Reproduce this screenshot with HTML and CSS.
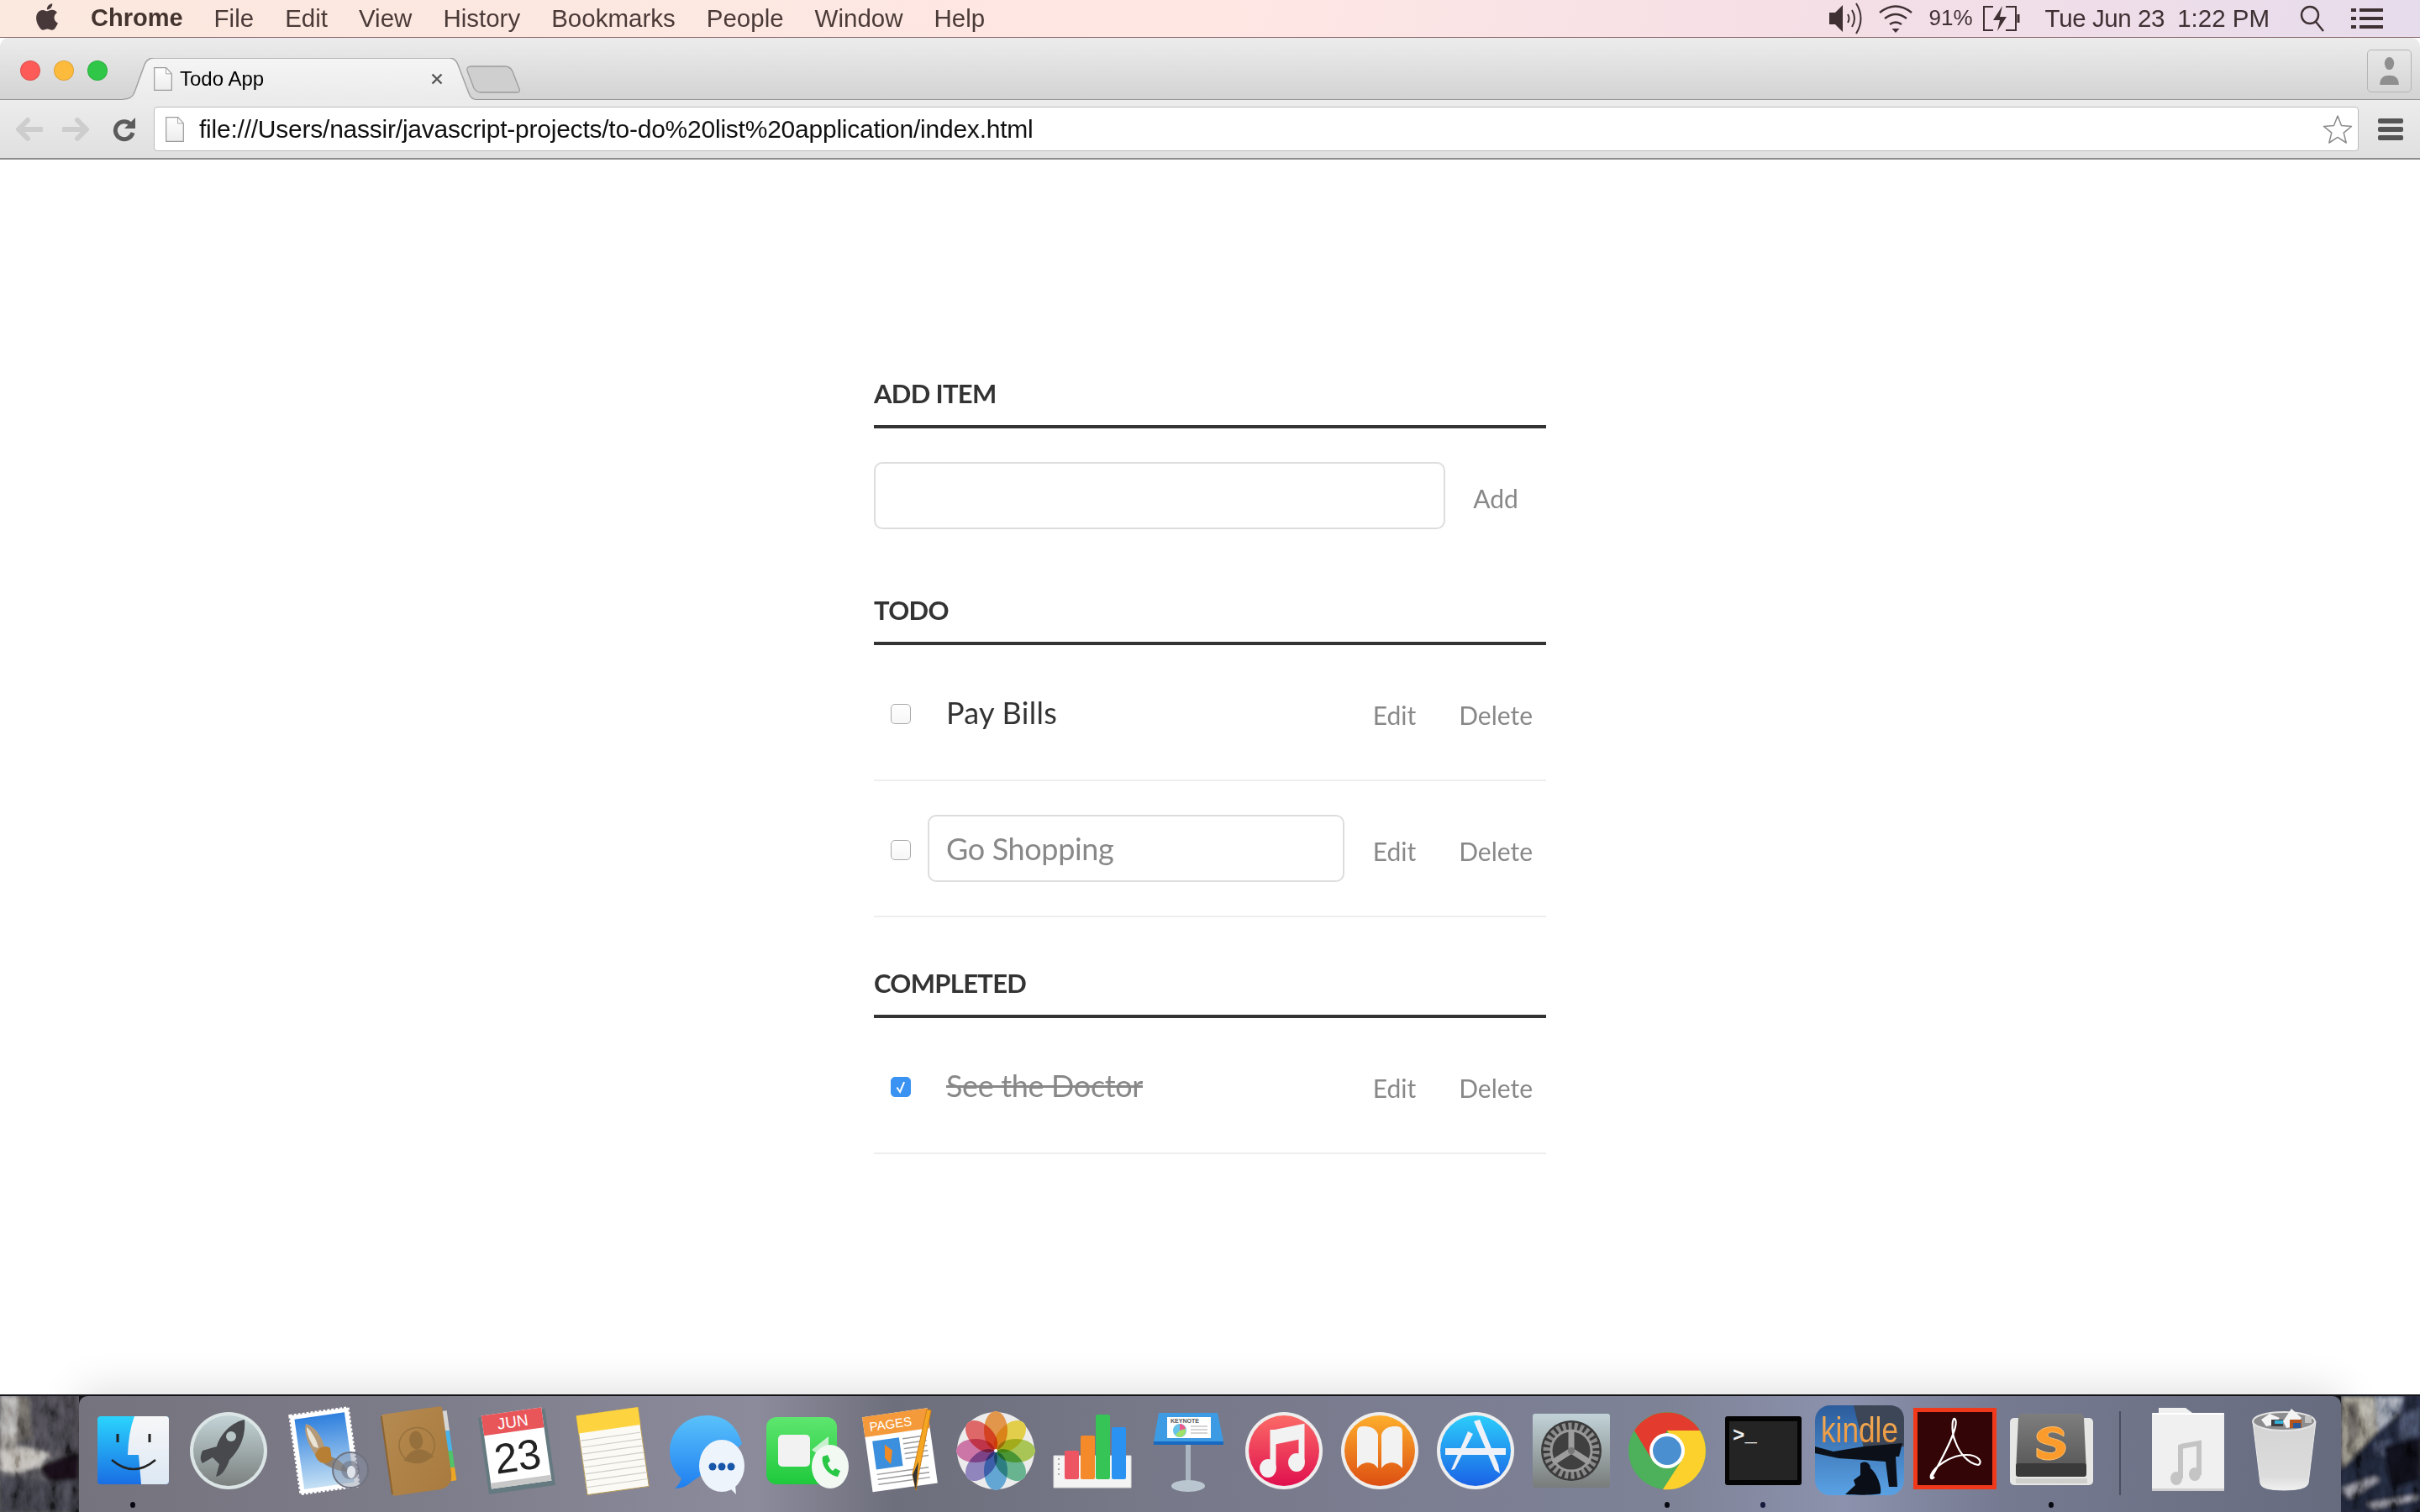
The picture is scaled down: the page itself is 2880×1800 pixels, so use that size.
FILE: index.html
```html
<!DOCTYPE html>
<html lang="en">
<head>
<meta charset="utf-8">
<title>Todo App</title>
<link rel="stylesheet" href="styles.css">
</head>
<body>

<svg class="defs">
	<defs>
		<linearGradient id="g_finder" x1="0" y1="0" x2="0" y2="1"><stop offset="0" stop-color="#2bd4fd"/><stop offset="1" stop-color="#1a6ee4"/></linearGradient>
		<linearGradient id="g_finder2" x1="0" y1="0" x2="0" y2="1"><stop offset="0" stop-color="#f7f7f8"/><stop offset="1" stop-color="#dce8f4"/></linearGradient>
		<linearGradient id="g_rocket" x1="0" y1="0" x2="0" y2="1"><stop offset="0" stop-color="#c3d4d7"/><stop offset="1" stop-color="#7b807e"/></linearGradient>
		<linearGradient id="g_sky" x1="0" y1="0" x2="0" y2="1"><stop offset="0" stop-color="#2f80de"/><stop offset="1" stop-color="#c4e0f4"/></linearGradient>
		<linearGradient id="g_book" x1="0" y1="0" x2="1" y2="1"><stop offset="0" stop-color="#b58a50"/><stop offset="1" stop-color="#a87a3e"/></linearGradient>
		<linearGradient id="g_bubble" x1="0" y1="0" x2="0" y2="1"><stop offset="0" stop-color="#5ac2fb"/><stop offset="1" stop-color="#1f7ff0"/></linearGradient>
		<linearGradient id="g_ftime" x1="0" y1="0" x2="0" y2="1"><stop offset="0" stop-color="#5ee66f"/><stop offset="1" stop-color="#1fc93c"/></linearGradient>
		<linearGradient id="g_music" x1="0" y1="0" x2="0" y2="1"><stop offset="0" stop-color="#fb6a66"/><stop offset="1" stop-color="#e0104f"/></linearGradient>
		<linearGradient id="g_ibooks" x1="0" y1="0" x2="0" y2="1"><stop offset="0" stop-color="#fdae2c"/><stop offset="1" stop-color="#dd4f12"/></linearGradient>
		<linearGradient id="g_store" x1="0" y1="0" x2="0" y2="1"><stop offset="0" stop-color="#2ccdfb"/><stop offset="1" stop-color="#1a62e6"/></linearGradient>
		<linearGradient id="g_prefs" x1="0" y1="0" x2="0" y2="1"><stop offset="0" stop-color="#c2d3d8"/><stop offset="1" stop-color="#787c7a"/></linearGradient>
		<linearGradient id="g_kindle" x1="0" y1="0" x2="0" y2="1"><stop offset="0" stop-color="#2c5c9c"/><stop offset="1" stop-color="#5aa2e4"/></linearGradient>
		<linearGradient id="g_text" x1="0" y1="0" x2="0" y2="1"><stop offset="0" stop-color="#f6b25a"/><stop offset="1" stop-color="#e8903a"/></linearGradient>
		<linearGradient id="g_sublime" x1="0" y1="0" x2="0" y2="1"><stop offset="0" stop-color="#7e7e7e"/><stop offset="1" stop-color="#565656"/></linearGradient>
		<linearGradient id="g_trash" x1="0" y1="0" x2="0" y2="1"><stop offset="0" stop-color="#d4d4d4"/><stop offset=".8" stop-color="#dcdcdc"/><stop offset="1" stop-color="#f0f0f0"/></linearGradient>
		<linearGradient id="g_tab" x1="0" y1="0" x2="0" y2="1"><stop offset="0" stop-color="#f5f5f5"/><stop offset="1" stop-color="#ebebeb"/></linearGradient>
		<linearGradient id="g_sheet" x1="0" y1="0" x2="0" y2="1"><stop offset="0" stop-color="#ffffff"/><stop offset="1" stop-color="#ececec"/></linearGradient>
		<filter id="soft"><feGaussianBlur stdDeviation="2.400"/></filter>
		<filter id="rock" x="0" y="0" width="100%" height="100%">
			<feTurbulence type="fractalNoise" baseFrequency=".07 .035" numOctaves="4" seed="7"/>
			<feColorMatrix type="matrix" values=".5 .5 0 0 0 .5 .5 0 0 0 .5 .5 0 0 0 0 0 0 0 1"/>
			<feComponentTransfer><feFuncR type="linear" slope="2.200" intercept="-.7"/><feFuncG type="linear" slope="2.200" intercept="-.7"/><feFuncB type="linear" slope="2.200" intercept="-.7"/></feComponentTransfer>
		</filter>
	</defs>
</svg>

<div class="menubar">
	<svg class="apple" viewBox="0 0 24 24"><path d="M18.71 19.5c-.83 1.24-1.71 2.45-3.05 2.47-1.34.03-1.77-.79-3.29-.79-1.53 0-2 .77-3.27.82-1.31.05-2.3-1.32-3.14-2.53C4.25 17 2.94 12.45 4.7 9.39c.87-1.52 2.43-2.48 4.12-2.51 1.28-.02 2.5.87 3.29.87.78 0 2.26-1.07 3.81-.91.65.03 2.47.26 3.64 1.98-.09.06-2.17 1.28-2.15 3.81.03 3.02 2.65 4.03 2.68 4.04-.03.07-.42 1.44-1.38 2.83M13 3.5c.73-.83 1.94-1.46 2.94-1.5.13 1.17-.34 2.35-1.04 3.19-.69.85-1.83 1.51-2.95 1.42-.15-1.15.41-2.35 1.05-3.11z"/></svg>
	<b class="menu_app">Chrome</b>
	<span>File</span>
	<span>Edit</span>
	<span>View</span>
	<span>History</span>
	<span>Bookmarks</span>
	<span>People</span>
	<span>Window</span>
	<span>Help</span>
	<div class="status">
		<svg class="st_sound" viewBox="0 0 42 44" fill="none" stroke="#3f3033" stroke-width="2"><path d="M1 15h7l9-9v32l-9-9H1z" fill="#3f3033" stroke="none"/><path d="M23 17q3 5 0 10"/><path d="M28 12q6 10 0 20"/><path d="M33 4q11 18 0 36"/></svg>
		<svg class="st_wifi" viewBox="0 0 42 36" fill="none" stroke="#3f3033" stroke-width="2.400"><path d="M2 11q19-15 38 0"/><path d="M8 18q13-10 26 0"/><path d="M14 25q7-5 14 0"/><path d="M16.500 30h9l-4.500 5z" fill="#3f3033" stroke="none"/></svg>
		<span class="st_pct">91%</span>
		<svg class="st_batt" viewBox="0 0 46 32" fill="none" stroke="#3f3033" stroke-width="2"><path d="M13 2H2v28h11M28 2h12v28H28"/><path d="M24 1 13 18h8l-3 13 11-17h-8z" fill="#3f3033" stroke="none"/><path d="M43 11v10" stroke-width="3"/></svg>
		<span class="st_date">Tue Jun 23</span>
		<span class="st_time">1:22 PM</span>
		<svg class="st_search" viewBox="0 0 30 32" fill="none" stroke="#3f3033" stroke-width="2.400"><circle cx="12" cy="12" r="10"/><path d="M19 20l9 11"/></svg>
		<svg class="st_list" viewBox="0 0 38 24" fill="#3f3033"><path d="M0 0h6v4H0zM10 0h28v4H10zM0 10h6v4H0zM10 10h28v4H10zM0 20h6v4H0zM10 20h28v4H10z"/></svg>
	</div>
</div>

<div class="browser">
	<div class="tabstrip">
		<div class="lights">
			<span class="light light_red"></span>
			<span class="light light_yellow"></span>
			<span class="light light_green"></span>
		</div>
		<div class="tab">
			<svg class="tab_bg" viewBox="0 0 418 50"><path d="M0 49C8 49 11 46 13 41L25 8C27 3 30 0 36 0H388C393 0 396 3 398 8L411 42C413 47 415 49 418 49V50H0z" fill="url(#g_tab)"/><path d="M0 49C8 49 11 46 13 41L25 8C27 3 30 0 36 0H388C393 0 396 3 398 8L411 42C413 47 415 49 418 49" fill="none" stroke="#a2a2a2" stroke-width="1.500"/></svg>
			<svg class="doc_icon" viewBox="0 0 22 28"><path d="M.7.7h14l6.600 7v19.600H.7z" fill="url(#g_sheet)" stroke="#9a9a9a" stroke-width="1.200"/><path d="M14.500.7v7.200h6.800" fill="none" stroke="#aaa"/></svg>
			<span class="tab_title">Todo App</span>
			<svg class="tab_close" viewBox="0 0 14 14"><path d="M1.500 1.500l11 11M12.500 1.500l-11 11" stroke="#555" stroke-width="2.400"/></svg>
		</div>
		<svg class="newtab" viewBox="0 0 66 34"><path d="M7 1H47C52 1 54 3 56 7L64 28C65 31 64 32 61 32H18C14 32 12 30 10 27L2 6C1 3 3 1 7 1z" fill="#cfcfcf" stroke="#9c9c9c" stroke-width="1.300"/></svg>
		<div class="profile">
			<svg viewBox="0 0 26 36" class="profile_icon"><ellipse cx="13" cy="8" rx="6" ry="8" fill="#8f8f8f"/><path d="M1 35c0-9 5-12 12-12s12 3 12 12z" fill="#8f8f8f"/></svg>
		</div>
	</div>

	<div class="toolbar">
		<svg class="nav_arrow" viewBox="0 0 32 28"><path d="M14 3 3 14l11 11M4 14h26" fill="none" stroke="#cdcdcd" stroke-width="6" stroke-linecap="round" stroke-linejoin="round"/></svg>
		<svg class="nav_arrow" viewBox="0 0 32 28"><path d="M18 3l11 11-11 11M28 14H2" fill="none" stroke="#cdcdcd" stroke-width="6" stroke-linecap="round" stroke-linejoin="round"/></svg>
		<svg class="nav_reload" viewBox="0 0 30 30"><path d="M22 8.500A10.500 10.500 0 1 0 25 19" fill="none" stroke="#5c5c5c" stroke-width="5"/><path d="M28 1v13H15z" fill="#5c5c5c"/></svg>
		<div class="omnibox">
			<svg class="doc_icon doc_url" viewBox="0 0 22 30"><path d="M.7.7h14l6.600 7v21.600H.7z" fill="url(#g_sheet)" stroke="#9a9a9a" stroke-width="1.200"/><path d="M14.500.7v7.200h6.800" fill="none" stroke="#aaa"/></svg>
			<span class="url">file:///Users/nassir/javascript-projects/to-do%20list%20application/index.html</span>
			<svg class="star" viewBox="0 0 36 36"><path d="M18 2l4.500 11.500 12 .9-9.300 7.700 3 11.900L18 27.400 7.800 34l3-11.900L1.500 14.400l12-.9z" fill="#fff" stroke="#8a8a8a" stroke-width="1.500" stroke-linejoin="round"/></svg>
		</div>
		<div class="hamburger"><span></span><span></span><span></span></div>
	</div>

	<div class="page">
		<div class="app">
			<section class="section section_add">
				<h3 class="section_title">Add Item</h3>
				<div class="add_row">
					<input type="text" class="field field_new">
					<button class="btn btn_add">Add</button>
				</div>
			</section>

			<section class="section">
				<h3 class="section_title">Todo</h3>
				<ul class="items">
					<li class="item">
						<span class="check"></span>
						<label class="item_label">Pay Bills</label>
						<div class="item_actions"><button class="btn">Edit</button><button class="btn">Delete</button></div>
					</li>
					<li class="item">
						<span class="check"></span>
						<input type="text" class="field field_edit" value="Go Shopping">
						<div class="item_actions"><button class="btn">Edit</button><button class="btn">Delete</button></div>
					</li>
				</ul>
			</section>

			<section class="section">
				<h3 class="section_title">Completed</h3>
				<ul class="items">
					<li class="item">
						<span class="check check_on"><svg viewBox="0 0 24 24"><path d="M7 12.500l4 6 5.500-13" fill="none" stroke="#fff" stroke-width="2.200"/></svg></span>
						<label class="item_label item_done">See the Doctor</label>
						<div class="item_actions"><button class="btn">Edit</button><button class="btn">Delete</button></div>
					</li>
				</ul>
			</section>
		</div>
	</div>
</div>

<div class="desk">
	<svg class="wall" viewBox="0 0 94 138" preserveAspectRatio="none">
		<rect width="94" height="138" fill="#464549"/>
		<g filter="url(#soft)">
			<path d="M0 0H20V44H0z" fill="#a5a2a0"/>
			<path d="M20 0H34L38 50 20 54z" fill="#56534f"/>
			<path d="M36 0H94V66L50 74 38 40z" fill="#434147"/>
			<path d="M0 44H18L22 66H0z" fill="#85817d"/>
			<path d="M0 66 30 60 58 70 46 84 20 92 0 88z" fill="#bcb8b2"/>
			<path d="M46 84 94 66V100L60 102z" fill="#141113"/>
			<path d="M0 96 30 98 60 102 94 100V138H0z" fill="#393941"/>
		</g>
		<rect class="wall_grain" width="94" height="138" filter="url(#rock)"/>
	</svg>

	<div class="dock">
		<div class="slot"><svg viewBox="0 0 110 110"><rect x="13" y="14" width="85" height="81" rx="4" fill="url(#g_finder)"/><path d="M57 14H94Q98 14 98 18V91Q98 95 94 95H65L62 60H49Q50 32 57 14z" fill="url(#g_finder2)"/><path d="M35.500 35h3v10h-3zM73.500 35h3v10h-3z" fill="#222"/><path d="M30 66Q56 88 82 66" fill="none" stroke="#222" stroke-width="2.500"/></svg><i class="dot"></i></div>

		<div class="slot"><svg viewBox="0 0 110 110"><circle cx="55" cy="55" r="46" fill="#dce5e6"/><circle cx="55" cy="55" r="42" fill="url(#g_rocket)"/><path d="M74 18C60 21 46 33 41 50L24 55C21 62 21 66 24 70L36 63 44 71 40 86C46 85 52 78 56 66 68 54 76 38 74 18z" fill="#47494c"/><circle cx="58" cy="38" r="6" fill="#b8c6c8"/></svg></div>

		<div class="slot"><svg viewBox="0 0 110 110"><g transform="translate(6 0) rotate(-8 50 55)"><rect x="14" y="8" width="70" height="94" fill="#fff" stroke="#fff" stroke-width="3" stroke-dasharray="3 2"/><rect x="19" y="13" width="60" height="84" fill="url(#g_sky)"/></g><path d="M33 23C44 26 54 40 56 56L44 60C36 48 30 34 33 23z" fill="#b49a78"/><path d="M34 27C40 32 46 42 48 52L42 50C37 42 34 34 34 27z" fill="#eae4d6"/><path d="M56 62C64 60 76 66 84 80 74 80 62 76 54 70z" fill="#8c8172"/><path d="M44 60C48 50 56 48 62 52L64 66C58 72 48 72 44 60z" fill="#b77f34"/><circle cx="86" cy="78" r="21" fill="#8a93a6" fill-opacity=".45" stroke="#6f7380" stroke-width="2"/><circle cx="86" cy="78" r="11" fill="#6f7380" fill-opacity=".6"/><path d="M82 80c0-5 3-7 5-7s5 2 5 7-3 8-5 8-5-3-5-8z" fill="#dfe4ea"/></svg></div>

		<div class="slot"><svg viewBox="0 0 110 110"><g transform="rotate(-8 55 55)"><rect x="86" y="12" width="7" height="24" fill="#d6d6d6"/><rect x="86" y="36" width="7" height="24" fill="#4ab4e8"/><rect x="86" y="60" width="7" height="20" fill="#4fc46a"/><rect x="86" y="80" width="7" height="16" fill="#eda624"/><path d="M18 6H85Q88 6 88 9V86Q88 104 70 104H18Q15 104 15 101V9Q15 6 18 6z" fill="url(#g_book)"/><path d="M15 8v94" stroke="#8c6430" stroke-width="2"/><circle cx="52" cy="48" r="21" fill="none" stroke="#96703c" stroke-width="1.500"/><ellipse cx="52" cy="42" rx="8" ry="11" fill="#96703c"/><path d="M34 64q18-22 36 0q-18 10-36 0z" fill="#96703c"/></g></svg></div>

		<div class="slot"><svg viewBox="0 0 110 110"><g transform="rotate(-8 55 55)"><rect x="15" y="10" width="80" height="92" fill="#657a80"/><rect x="19" y="8" width="72" height="88" fill="#fff"/><rect x="19" y="8" width="72" height="24" fill="#e9565a"/><text x="55" y="27" class="cal_month">JUN</text><text x="55" y="79" class="cal_day">23</text><rect x="19" y="89" width="72" height="7" fill="#c8c8c8"/></g></svg></div>

		<div class="slot"><svg viewBox="0 0 110 110"><g transform="rotate(-8 55 55)"><rect x="18" y="8" width="74" height="95" fill="#fbfaf5" stroke="#b79a54"/><rect x="18" y="8" width="74" height="21" fill="#fdd33f"/><path d="M18 38h74M18 46h74M18 54h74M18 62h74M18 70h74M18 78h74M18 86h74M18 94h74" stroke="#cfcfca" stroke-width="1.200"/></g></svg></div>

		<div class="slot"><svg viewBox="0 0 110 110"><path d="M54 13C30 13 9 30 9 56c0 14 6 25 14 32-2 5-4 9-8 12 8 0 15-3 20-8l30-20 30-25C90 27 76 13 54 13z" fill="url(#g_bubble)"/><ellipse cx="71" cy="73" rx="27" ry="31" fill="#eef4fb"/><path d="M80 99l8 8-1-12z" fill="#eef4fb"/><circle cx="60" cy="74" r="4.500" fill="#1756a8"/><circle cx="71" cy="74" r="4.500" fill="#1756a8"/><circle cx="82" cy="74" r="4.500" fill="#1756a8"/></svg></div>

		<div class="slot"><svg viewBox="0 0 110 110"><rect x="10" y="15" width="84" height="80" rx="12" fill="url(#g_ftime)"/><rect x="24" y="36" width="38" height="38" rx="5" fill="#f2f2f2"/><path d="M64 54l20-16v30z" fill="#eaf6ec" fill-opacity=".8"/><ellipse cx="86" cy="74" rx="22" ry="26" fill="#f2f8f2"/><path d="M77 62c-2 10 6 22 18 24l3-7-6-3-3 3c-3-2-5-6-6-9l3-3-3-7z" fill="#28c745"/></svg></div>

		<div class="slot"><svg viewBox="0 0 110 110"><g transform="rotate(-8 50 55)"><rect x="16" y="10" width="78" height="90" fill="#fff"/><rect x="16" y="10" width="78" height="24" fill="#f49a3a"/><text x="23" y="28" class="pages_name">PAGES</text><rect x="24" y="40" width="32" height="34" fill="#3b8fdc"/><path d="M38 46l8 8-4 16-6-8z" fill="#f08a24"/><path d="M60 42h28M60 48h28M60 54h28M60 60h28M60 66h28M24 80h62M24 86h62M24 92h62" stroke="#9b9b9b" stroke-width="1.500"/></g><path d="M92 7 77 84l-3 18-4-19L87 6z" fill="#f5a623" stroke="#d17f12"/><path d="M77 68l-3 34-4-18z" fill="#333"/></svg></div>

		<div class="slot"><svg viewBox="0 0 110 110"><g class="petals"><circle cx="55" cy="55" r="46" fill="#ececec"/><ellipse cx="55" cy="31" rx="14" ry="23" fill="#f5a252"/><ellipse cx="55" cy="31" rx="14" ry="23" fill="#f5df50" transform="rotate(45 55 55)"/><ellipse cx="55" cy="31" rx="14" ry="23" fill="#b7d55c" transform="rotate(90 55 55)"/><ellipse cx="55" cy="31" rx="14" ry="23" fill="#70c29c" transform="rotate(135 55 55)"/><ellipse cx="55" cy="31" rx="14" ry="23" fill="#6cb4e4" transform="rotate(180 55 55)"/><ellipse cx="55" cy="31" rx="14" ry="23" fill="#9c90cc" transform="rotate(225 55 55)"/><ellipse cx="55" cy="31" rx="14" ry="23" fill="#dc7fb4" transform="rotate(270 55 55)"/><ellipse cx="55" cy="31" rx="14" ry="23" fill="#f07070" transform="rotate(315 55 55)"/></g><circle cx="55" cy="55" r="2" fill="#fff"/></svg></div>

		<div class="slot"><svg viewBox="0 0 110 110"><path d="M10 61H102V99H10z" fill="#f4f4f4" stroke="#ddd"/><rect x="23" y="55" width="17" height="34" rx="2" fill="#ee5563"/><rect x="42" y="37" width="17" height="52" rx="2" fill="#f58a2a"/><rect x="60" y="12" width="17" height="77" rx="2" fill="#35c455"/><rect x="79" y="27" width="17" height="62" rx="2" fill="#2a93f2"/><path d="M16 64v24" stroke="#aaa" stroke-width="2" stroke-dasharray="2 4"/></svg></div>

		<div class="slot"><svg viewBox="0 0 110 110"><path d="M52 48h6v46h-6z" fill="#a9b6c2"/><ellipse cx="55" cy="97" rx="20" ry="7" fill="#b9c6d0"/><path d="M20 10H90L97 44H14z" fill="#3d9be4"/><path d="M14 44H97V48H14z" fill="#1969c0"/><rect x="30" y="15" width="52" height="25" fill="#fff"/><text x="34" y="22" class="key_name">KEYNOTE</text><circle cx="45" cy="31" r="8" fill="#66c4ea"/><path d="M45 31V23a8 8 0 0 1 7 6z" fill="#ee5a8a"/><path d="M45 31l7-2a8 8 0 0 1-7 10 8 8 0 0 1-5-3z" fill="#9fe06a"/><path d="M58 26h20M58 30h20M58 34h20" stroke="#aaa"/></svg></div>

		<div class="slot"><svg viewBox="0 0 110 110"><circle cx="55" cy="55" r="46" fill="#eeeeee"/><circle cx="55" cy="55" r="42" fill="url(#g_music)"/><path d="M42 34 76 27V68" fill="none" stroke="#f2f2f2" stroke-width="7"/><path d="M42 30V76" fill="none" stroke="#f2f2f2" stroke-width="7"/><ellipse cx="36" cy="76" rx="10" ry="11" fill="#f2f2f2"/><ellipse cx="70" cy="69" rx="10" ry="11" fill="#f2f2f2"/><path d="M42 36 76 29v12L42 48z" fill="#f2f2f2"/></svg></div>

		<div class="slot"><svg viewBox="0 0 110 110"><circle cx="55" cy="55" r="46" fill="#eeeeee"/><circle cx="55" cy="55" r="42" fill="url(#g_ibooks)"/><path d="M53 36C50 28 44 26 36 26 30 26 28 28 28 34V76C34 68 46 66 53 76z" fill="#f2f2f2"/><path d="M57 36C60 28 66 26 74 26 80 26 82 28 82 34V76C76 68 64 66 57 76z" fill="#f2f2f2"/></svg></div>

		<div class="slot"><svg viewBox="0 0 110 110"><circle cx="55" cy="55" r="46" fill="#eeeeee"/><circle cx="55" cy="55" r="42" fill="url(#g_store)"/><path d="M19 52H91V60H19z" fill="#eef2f8"/><path d="M46 32 26 78l4-1 22-42zM53 20 78 78l6 4-2-10L60 18z" fill="#eef2f8"/></svg></div>

		<div class="slot"><svg viewBox="0 0 110 110"><rect x="9" y="11" width="92" height="88" rx="3" fill="url(#g_prefs)"/><circle cx="55" cy="55" r="36" fill="#3b3b3b"/><circle cx="55" cy="55" r="29" fill="none" stroke="#8b8b8b" stroke-width="9" stroke-dasharray="4 3"/><circle cx="55" cy="55" r="24" fill="#404040" stroke="#999" stroke-width="3"/><path d="M55 55V30M55 55 33 69M55 55 77 69" stroke="#9d9d9d" stroke-width="7"/><circle cx="55" cy="55" r="4" fill="#777"/></svg></div>

		<div class="slot"><svg viewBox="0 0 110 110"><circle cx="55" cy="55" r="46" fill="#4db05a"/><path d="M16 31A46 46 0 0 1 94 31L55 31 36 64z" fill="#e33b2e"/><path d="M94 31A46 46 0 0 1 50 101L74 64 55 31z" fill="#fdd12c"/><circle cx="55" cy="55" r="21" fill="#fff"/><circle cx="55" cy="55" r="17" fill="#4a90d0"/></svg><i class="dot"></i></div>

		<div class="slot"><svg viewBox="0 0 110 110"><rect x="10" y="14" width="91" height="82" rx="3" fill="#050505"/><rect x="15" y="20" width="81" height="70" fill="#242424"/><text x="19" y="44" class="term_prompt">&gt;_</text></svg><i class="dot dot_navy"></i></div>

		<div class="slot"><svg viewBox="0 0 110 110"><rect x="2" y="1" width="106" height="107" rx="18" fill="url(#g_kindle)"/><path d="M48 1H90Q108 1 108 19V50L60 52z" fill="#3d4656"/><path d="M2 50 24 56 60 50 106 46 102 62 98 62 100 98 90 98 86 68 60 66 30 64 2 58z" fill="#0c1119"/><text x="9" y="45" class="kindle_name" textLength="92" lengthAdjust="spacingAndGlyphs">kindle</text><path d="M56 70C62 66 68 70 68 76 74 80 82 96 80 106 74 108 50 108 38 107L50 96 48 90 56 84z" fill="#0a0e16"/></svg></div>

		<div class="slot"><svg viewBox="0 0 110 110"><rect x="5" y="4" width="99" height="97" fill="#f0391a"/><rect x="10" y="9" width="89" height="87" fill="#330506"/><path d="M26 88C36 70 60 28 55 18 52 12 49 30 55 44 60 58 70 70 82 72 88 70 84 60 68 60 50 60 30 74 26 84 25 88 27 90 30 86" fill="none" stroke="#fff" stroke-width="2.200"/></svg></div>

		<div class="slot"><svg viewBox="0 0 110 110"><rect x="6" y="16" width="99" height="80" rx="5" fill="#e6e6e4"/><path d="M13 88h85v6H13z" fill="#cfcfcd"/><path d="M21 11H89Q94 11 94 16L97 80H13L16 16Q16 11 21 11z" fill="url(#g_sublime)"/><rect x="13" y="70" width="84" height="16" rx="3" fill="#3a3a3a"/><path d="M70 33C66 22 38 26 38 38 38 50 62 46 61 54 60 60 46 58 38 52V62C48 70 74 66 72 50 71 40 50 42 51 36 52 31 62 32 70 38z" fill="#fb9b2c" stroke="#ffc270"/></svg><i class="dot"></i></div>

		<div class="dock_sep"></div>

		<div class="slot"><svg viewBox="0 0 110 110"><path d="M20 4H52L60 10H98V102H12V10H20z" fill="#f0f0f0"/><path d="M13 11H97" stroke="#fff" stroke-width="2"/><path d="M12 100H98V103H12z" fill="#cfcfcf"/><path d="M46 50 68 46V84" fill="none" stroke="#c4c4c4" stroke-width="6"/><path d="M46 48V88" stroke="#c4c4c4" stroke-width="6"/><ellipse cx="41" cy="88" rx="7" ry="8" fill="#c4c4c4"/><ellipse cx="63" cy="83" rx="7" ry="8" fill="#c4c4c4"/></svg></div>

		<div class="slot"><svg viewBox="0 0 110 110"><path d="M18 20Q55 32 93 20L84 94Q82 102 55 102 28 102 27 94z" fill="url(#g_trash)" stroke="#ececec"/><ellipse cx="55" cy="20" rx="37" ry="11" fill="#8d8d90" stroke="#e4e4e4" stroke-width="2"/><path d="M28 18 38 11 50 16 44 24 34 26zM54 20 64 5 76 16 68 26 58 28z" fill="#f4f4f4"/><path d="M40 18h14v8H40z" fill="#3f3f44"/><path d="M44 19h10v4H44z" fill="#35b0d8"/><path d="M62 18h14v10H62z" fill="#b5561f"/><path d="M66 22h9v6h-9z" fill="#2a5a9a"/><path d="M80 14h8v8h-8z" fill="#c4c4c4"/></svg></div>
	</div>

	<svg class="wall" viewBox="0 0 94 138" preserveAspectRatio="none">
		<rect width="94" height="138" fill="#1f2333"/>
		<g filter="url(#soft)">
			<path d="M0 0H60L66 16 32 60 0 85z" fill="#8a867b"/>
			<path d="M40 0H76L68 20 44 44z" fill="#858c9a"/>
			<path d="M8 8 20 4 22 48 8 66z" fill="#5a5753"/>
			<path d="M0 88 40 44 70 20 94 6V138H0z" fill="#1f2333"/>
			<path d="M70 24 94 14V46L70 52zM40 56 60 52 52 72 42 70z" fill="#3e445a"/>
			<path d="M50 60 94 50V100L60 110z" fill="#0e1019"/>
			<path d="M0 110 40 96 46 100 10 122zM30 128 90 118 94 122 40 134z" fill="#7c7c84"/>
		</g>
		<rect class="wall_grain" width="94" height="138" filter="url(#rock)"/>
	</svg>
</div>

</body>
</html>
```

FILE: styles.css
```css
* {
	box-sizing: border-box;
}

html, body {
	margin: 0;
	height: 1800px;
	overflow: hidden;
}

body {
	display: flex;
	flex-direction: column;
	background-color: #fff;
	font-family: "Liberation Sans", Arial, sans-serif;
}

.defs {
	position: absolute;
	width: 0;
	height: 0;
}

/* mac menu bar */
.menubar {
	display: flex;
	align-items: center;
	flex: none;
	height: 45px;
	padding: 0 44px 1px 37px;
	gap: 37px;
	background: linear-gradient(to right, #fbe8de 0%, #ffe7e4 50%, #f5dfe6 75%, #e7dcec 100%);
	border-bottom: 1px solid #86686a;
	font-size: 29.500px;
	color: #4a3a38;
	white-space: nowrap;
}

.apple {
	width: 38px;
	height: 40px;
	margin-right: -4px;
	margin-top: -4px;
	fill: #47393a;
}

.menu_app {
	font-size: 29px;
	color: #43342f;
}

.status {
	display: flex;
	align-items: center;
	margin-left: auto;
	color: #3f3033;
}

.st_sound { width: 42px; height: 44px; margin-right: 17px; }
.st_wifi { width: 42px; height: 36px; margin-right: 19px; }
.st_pct { font-size: 26px; margin-right: 11px; }
.st_batt { width: 46px; height: 32px; margin-right: 29px; }
.st_date { margin-right: 15px; letter-spacing: -.4px; }
.st_time { margin-right: 36px; }
.st_search { width: 30px; height: 32px; margin-right: 31px; }
.st_list { width: 38px; height: 24px; }

/* browser window */
.browser {
	display: flex;
	flex-direction: column;
	flex: 1;
	min-height: 0;
	border-radius: 10px 10px 0 0;
	background-color: #fff;
}

.tabstrip {
	display: flex;
	align-items: flex-start;
	flex: none;
	height: 74px;
	background: linear-gradient(#ececec, #d3d3d3);
	border-top-left-radius: 10px;
	border-top-right-radius: 10px;
	border-bottom: 1px solid #979797;
}

.lights {
	display: flex;
	gap: 16px;
	width: 147px;
	padding: 27px 0 0 24px;
}

.light {
	width: 24px;
	height: 24px;
	border-radius: 50%;
	border: 1px solid rgba(0, 0, 0, .12);
}

.light_red { background-color: #fc5b57; }
.light_yellow { background-color: #fdbb3d; }
.light_green { background-color: #30c748; }

.tab {
	position: relative;
	display: flex;
	align-items: center;
	width: 418px;
	height: 50px;
	margin-top: 24px;
	padding: 0 0 0 36px;
}

.tab_bg {
	position: absolute;
	top: 0;
	left: 0;
	width: 418px;
	height: 50px;
}

.tab .doc_icon {
	position: relative;
	width: 22px;
	height: 28px;
}

.tab_title {
	position: relative;
	margin-left: 9px;
	font-size: 24px;
	color: #000;
}

.tab_close {
	position: relative;
	width: 14px;
	height: 14px;
	margin-left: auto;
	margin-right: 38px;
}

.newtab {
	flex: none;
	width: 66px;
	height: 34px;
	margin: 33px 0 0 -11px;
}

.profile {
	display: flex;
	align-items: center;
	justify-content: center;
	width: 53px;
	height: 51px;
	margin: 14px 10px 0 auto;
	border: 1px solid #b5b5b5;
	border-radius: 5px;
}

.profile_icon {
	width: 25px;
	height: 34px;
}

.toolbar {
	display: flex;
	align-items: center;
	flex: none;
	height: 71px;
	padding: 0 20px 0 19px;
	background: linear-gradient(#ececec, #e0e0e0);
	border-bottom: 2px solid #8c8c8c;
}

.nav_arrow {
	width: 32px;
	height: 28px;
	margin-right: 23px;
}

.nav_reload {
	width: 30px;
	height: 30px;
	margin-left: 4px;
	margin-right: 20px;
}

.omnibox {
	display: flex;
	align-items: center;
	width: 2624px;
	height: 53px;
	padding: 0 6px 0 13px;
	background-color: #fff;
	border: 1px solid #bcbcbc;
	border-radius: 4px;
}

.doc_url {
	width: 22px;
	height: 30px;
	flex: none;
}

.url {
	margin-left: 18px;
	font-size: 30px;
	color: #111;
	letter-spacing: -.23px;
}

.star {
	width: 36px;
	height: 36px;
	margin-left: auto;
}

.hamburger {
	display: flex;
	flex-direction: column;
	gap: 4px;
	width: 30px;
	margin-left: 23px;
}

.hamburger span {
	height: 6px;
	border-radius: 2px;
	background-color: #555;
}

/* todo app */
.page {
	flex: 1;
	min-height: 0;
	font-family: Lato, sans-serif;
}

.app {
	width: 800px;
	margin: 0 auto;
	padding-top: 256px;
	color: #333;
}

.section {
	margin-bottom: 56px;
}

.section_add {
	margin-bottom: 74px;
}

.section_title {
	margin: 0;
	padding-bottom: 16px;
	border-bottom: 4px solid #333;
	font-size: 31px;
	font-weight: 700;
	letter-spacing: -.7px;
	line-height: 44px;
	text-transform: uppercase;
	color: #333;
}

.add_row {
	display: flex;
	align-items: center;
	margin-top: 40px;
}

.field {
	height: 80px;
	padding: 0 20px;
	background-color: #fff;
	border: 2px solid #ddd;
	border-radius: 10px;
	outline: none;
	font-family: Lato, sans-serif;
	font-size: 36px;
	letter-spacing: -.35px;
	color: #888;
}

.field_new {
	width: 680px;
}

.field_edit {
	width: 496px;
}

.btn {
	padding: 0 16px;
	background: none;
	border: 0;
	font-family: Lato, sans-serif;
	font-size: 30px;
	line-height: 40px;
	color: #888;
}

.btn_add {
	width: 120px;
	margin-top: 6px;
	padding: 0;
}

.items {
	margin: 0;
	padding: 0;
	list-style: none;
}

.item {
	display: flex;
	align-items: center;
	height: 162px;
	border-bottom: 2px solid #eee;
}

.check {
	flex: none;
	width: 24px;
	height: 24px;
	margin: 4px 20px 0 20px;
	background: linear-gradient(#fff, #f6f6f6);
	border: 1px solid #a9a9a9;
	border-radius: 5px;
}

.check_on {
	background: #3a92f2;
	border-color: #3a92f2;
}

.check svg {
	display: block;
	width: 22px;
	height: 22px;
}

.item_label {
	padding-left: 22px;
	font-size: 36px;
	letter-spacing: .3px;
	line-height: 44px;
	color: #333;
}

.item_done {
	letter-spacing: -.35px;
	color: #888;
	text-decoration: line-through;
}

.item_actions {
	display: flex;
	gap: 19px;
	margin-left: auto;
	margin-top: 6px;
}

/* desktop + dock */
.desk {
	display: flex;
	flex: none;
	height: 140px;
	background-color: #15141a;
	padding-top: 2px;
}

.wall {
	flex: none;
	width: 94px;
	height: 138px;
}

.wall_grain {
	mix-blend-mode: overlay;
	opacity: .55;
}

.dock {
	position: relative;
	display: flex;
	flex: 1;
	padding-left: 7px;
	background: linear-gradient(to right, #75737d 0%, #7c7b88 14%, #8c8b9c 30%, #6e6f7c 36%, #767787 46%, #7c7e92 60%, #7d8296 70%, #8c92ad 78%, #757a91 85%, #666b7e 100%);
	border-radius: 10px 10px 0 0;
	box-shadow: 0 -6px 50px rgba(0, 0, 0, .14);
}

.slot {
	position: relative;
	flex: none;
	width: 114.150px;
	padding-top: 10px;
	text-align: center;
}

.slot svg {
	display: block;
	width: 110px;
	height: 110px;
	margin: 0 auto;
	overflow: visible;
}

.petals {
	isolation: isolate;
}

.petals ellipse {
	mix-blend-mode: multiply;
}

.dot {
	position: absolute;
	left: 54px;
	bottom: 5px;
	width: 6px;
	height: 7px;
	border-radius: 50%;
	background-color: #06070f;
}

.dot_navy {
	background-color: #15193a;
}

.dock_sep {
	flex: none;
	width: 2px;
	height: 100px;
	margin: 18px 23px 0 24px;
	background-color: #4a4e60;
}

.cal_month {
	font-family: "Liberation Sans", sans-serif;
	font-size: 19px;
	fill: #fff;
	text-anchor: middle;
}

.cal_day {
	font-family: "Liberation Sans", sans-serif;
	font-size: 50px;
	fill: #222;
	text-anchor: middle;
}

.pages_name {
	font-family: "Liberation Sans", sans-serif;
	font-size: 15px;
	fill: #fff;
}

.key_name {
	font-family: "Liberation Sans", sans-serif;
	font-size: 7px;
	font-weight: 700;
	fill: #555;
}

.term_prompt {
	font-family: "Liberation Mono", monospace;
	font-size: 24px;
	font-weight: 700;
	fill: #eee;
}

.kindle_name {
	font-family: "Liberation Sans", sans-serif;
	font-size: 42px;
	fill: url(#g_text);
}
```
